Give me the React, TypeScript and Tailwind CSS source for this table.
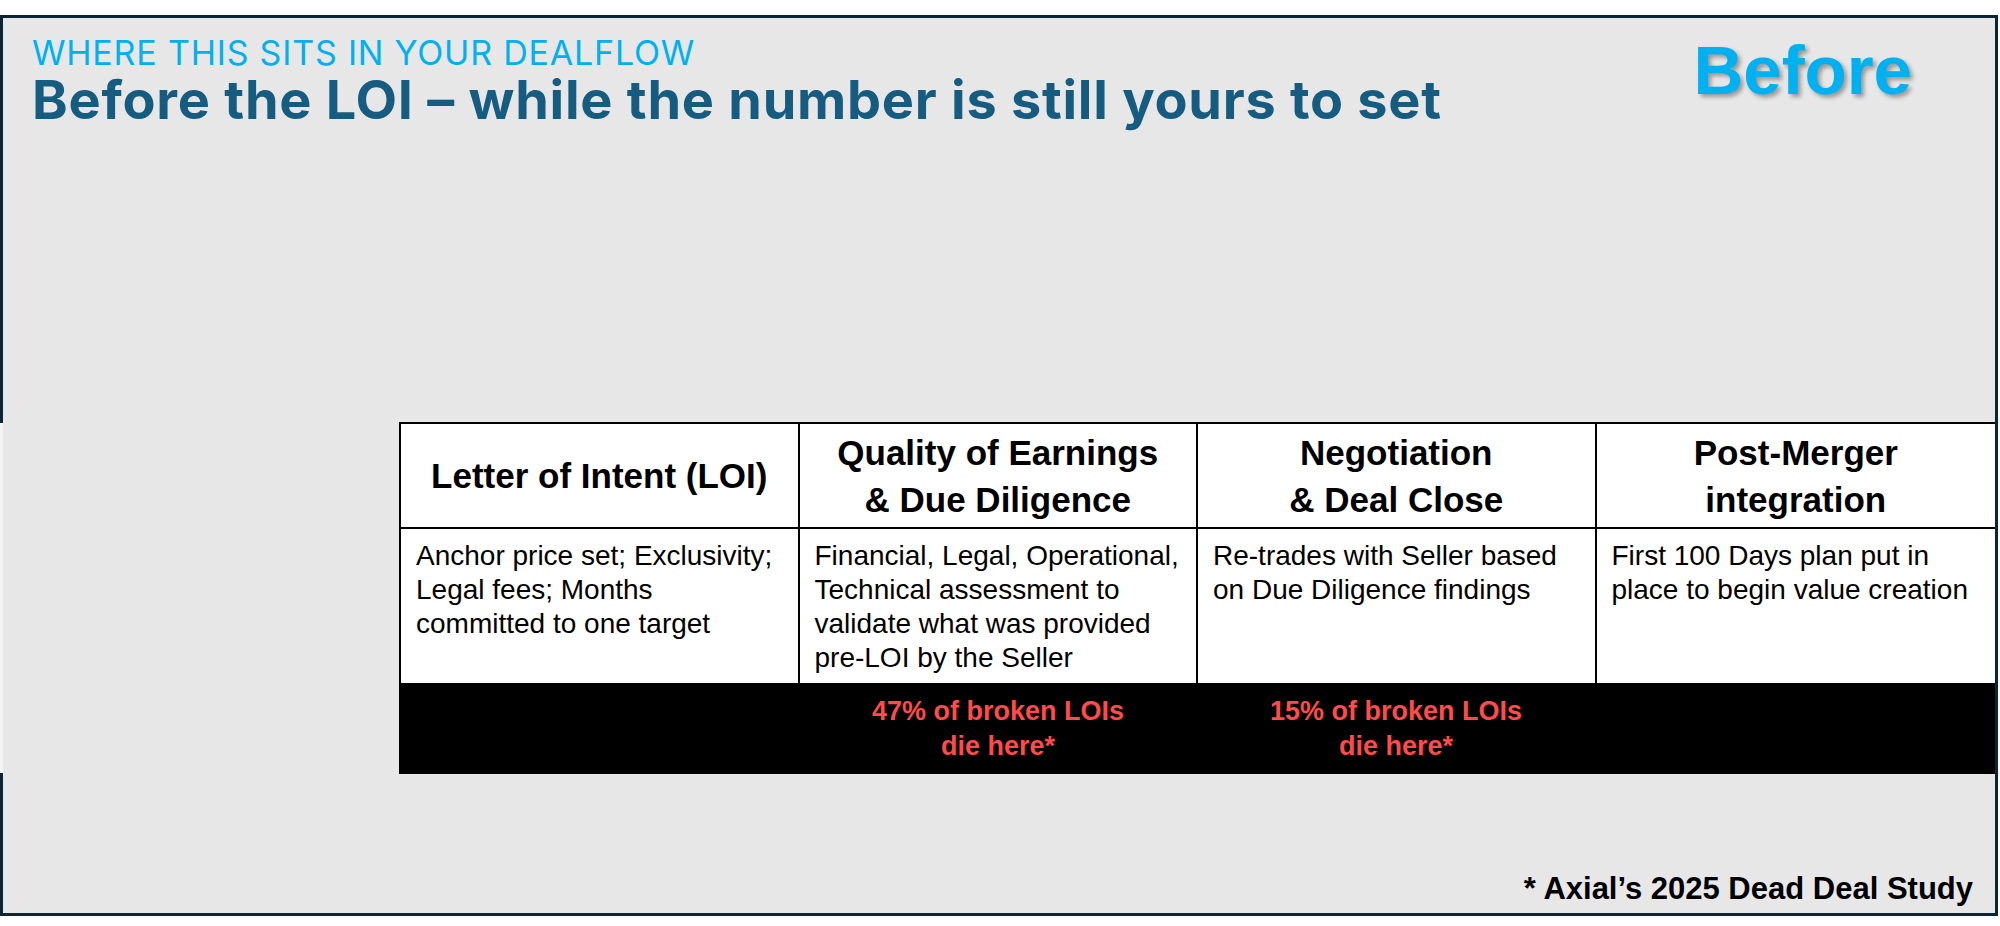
const stages = [
    { title: ['Letter of Intent (LOI)'], body: 'Anchor price set; Exclusivity; Legal fees; Months committed to one target', note: null },
    {
        title: ['Quality of Earnings', '& Due Diligence'],
        body: 'Financial, Legal, Operational, Technical assessment to validate what was provided pre-LOI by the Seller',
        note: '47% of broken LOIs',
    },
    { title: ['Negotiation', '& Deal Close'], body: 'Re-trades with Seller based on Due Diligence findings', note: '15% of broken LOIs' },
    { title: ['Post-Merger', 'integration'], body: 'First 100 Days plan put in place to begin value creation', note: null },
];

const cellDivider = (i: number) => (i < stages.length - 1 ? 'border-r-2 border-black' : '');

function DealflowTable() {
    return (
        <div className="ml-[396px] mt-[295px] w-[1596px] border-t-2 border-l-2 border-black bg-white font-['Liberation_Sans',Arial,sans-serif] text-black">
            <div className="grid grid-cols-4 border-b-2 border-black">
                {stages.map((s, i) => (
                    <div
                        key={i}
                        className={`flex h-[103px] flex-col items-center justify-center pt-[2px] text-center text-[35px] font-bold leading-[46.7px] ${cellDivider(i)}`}
                    >
                        {s.title.map((line) => (
                            <span key={line}>{line}</span>
                        ))}
                    </div>
                ))}
            </div>
            <div className="grid grid-cols-4">
                {stages.map((s, i) => (
                    <div key={i} className={`h-[154px] px-[15px] pt-[10px] text-[28px] leading-[34px] ${cellDivider(i)}`}>
                        {s.body}
                    </div>
                ))}
            </div>
            <div className="-ml-[2px] grid h-[91px] w-[1596px] grid-cols-[400px_398px_398px_1fr] bg-black">
                {stages.map((s, i) => (
                    <div key={i} className="flex flex-col items-center justify-center text-center text-[27px] font-bold leading-[35px] text-[#ff4b4b]">
                        {s.note && (
                            <>
                                <span>{s.note}</span>
                                <span>die here*</span>
                            </>
                        )}
                    </div>
                ))}
            </div>
        </div>
    );
}

export default function App() {
    return (
        <div className="h-[926px] w-[2000px] bg-white pt-[15px]">
            <div className="flex h-[901px] w-[1998px]">
                {/* left edge of the slide frame, broken where the table sits */}
                <div className="flex w-[3px] flex-col">
                    <div className="h-[408px] bg-[#0b2536]" />
                    <div className="h-[350px] bg-[#f4f4f4]" />
                    <div className="flex-1 bg-[#0b2536]" />
                </div>
                <div className="flex flex-1 flex-col border-y-[3px] border-r-[3px] border-[#0b2536] bg-[#e7e7e7]">
                    <div className="flex items-start justify-between pl-[29px] pr-[83px] pt-[18px]">
                        <div className="flex flex-col font-['Inter',sans-serif]">
                            <span className="text-[34px] leading-[34px] tracking-[0.8px] text-[#00b0f0]">
                                WHERE THIS SITS IN YOUR DEALFLOW
                            </span>
                            <h1 className="mt-[3px] text-[54px] font-bold leading-[54px] tracking-[0.75px] text-[#165c80]">
                                Before the LOI – while the number is still yours to set
                            </h1>
                        </div>
                        <span className="font-['Liberation_Sans',Arial,sans-serif] text-[69px] font-bold leading-[69px] text-[#00b0f0] [text-shadow:3px_3px_4px_rgba(0,0,0,0.35)]">
                            Before
                        </span>
                    </div>
                    <DealflowTable />
                    <div className="mt-auto pb-[9px] pr-[22px] text-right font-['Liberation_Sans',Arial,sans-serif] text-[31px] font-bold leading-[31px] text-black">
                        * Axial’s 2025 Dead Deal Study
                    </div>
                </div>
            </div>
        </div>
    );
}
